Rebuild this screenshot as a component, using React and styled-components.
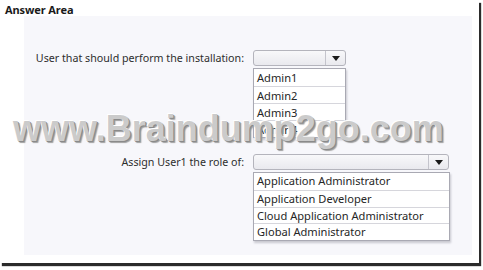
import React from "react";
import styled, { createGlobalStyle } from "styled-components";

const GlobalStyle = createGlobalStyle`
  html, body { margin: 0; padding: 0; background: #ffffff; }
  body { font-family: "Noto Sans", "Open Sans", Arial, sans-serif; }
`;

const Frame = styled.div`
  width: 483px;
  height: 270px;
  position: relative;
  overflow: hidden;
  background: #ffffff;
`;

const Screen = styled.div`
  width: 479px;
  height: 263px;
  background: #ffffff;
  box-shadow: 2px 3px 1px rgba(20, 20, 20, 0.9);
  display: flex;
  flex-direction: column;
`;

const Title = styled.div`
  font-family: "Noto Sans", Arial, sans-serif;
  font-weight: 700;
  font-size: 11px;
  line-height: 13px;
  color: #1a1a1a;
  padding: 3px 0 0 5px;
  height: 13px;
  letter-spacing: -0.1px;
`;

const Panel = styled.div`
  margin-left: 24px;
  width: 448px;
  height: 239px;
  background: #f7f7fb;
  display: grid;
  grid-template-columns: 220px auto;
  column-gap: 9px;
  align-content: start;
  padding-top: 34px;
  box-sizing: border-box;
`;

const Label = styled.div`
  font-size: 10.7px;
  line-height: 16px;
  height: 16px;
  color: #2e2e2e;
  text-align: right;
  white-space: nowrap;
  margin-top: ${(p) => p.$top || 0}px;
`;

const Field = styled.div`
  display: flex;
  flex-direction: column;
  align-items: flex-start;
  margin-top: ${(p) => p.$top || 0}px;
`;

const Select = styled.div`
  width: ${(p) => p.$w}px;
  height: 16px;
  box-sizing: border-box;
  border: 1px solid #b4b4bc;
  border-radius: 3px;
  background: linear-gradient(#f8f8fa, #e9e9ee);
  display: flex;
  justify-content: flex-end;
`;

const ArrowBox = styled.div`
  width: 19px;
  border-left: 1px solid #c4c4cc;
  display: flex;
  align-items: center;
  justify-content: center;
`;

const List = styled.div`
  margin-top: 2px;
  width: ${(p) => p.$w}px;
  box-sizing: border-box;
  background: #ffffff;
  border: 1px solid #a9a9b3;
  box-shadow: 1px 2px 2px rgba(60, 60, 80, 0.25);
  display: flex;
  flex-direction: column;
`;

const Item = styled.div`
  height: ${(p) => p.$h}px;
  line-height: ${(p) => p.$h}px;
  box-sizing: border-box;
  padding-left: 3px;
  font-size: 11.1px;
  color: #262626;
  white-space: nowrap;
  border-top: 1px solid #d6d6dc;
  &:first-child { border-top: none; }
`;

const Watermark = styled.div`
  position: absolute;
  left: 13px;
  top: 109px;
  font-family: "Liberation Sans", Arial, sans-serif;
  font-weight: 700;
  font-size: 36px;
  line-height: 40px;
  color: #cbcbcb;
  white-space: nowrap;
  text-shadow: -1px -1px 0 #ffffff, 1px 1px 0 #8a8a8a, 2px 2px 1px #a0a0a0;
  pointer-events: none;
`;

const Arrow = () => (
  <svg width="8" height="5" viewBox="0 0 8 5">
    <path d="M0 0 H8 L4 5 Z" fill="#1a1a1a" />
  </svg>
);

const Dropdown = ({ w, listW, items, rowH }) => (
  <>
    <Select $w={w}>
      <ArrowBox>
        <Arrow />
      </ArrowBox>
    </Select>
    <List $w={listW}>
      {items.map((t) => (
        <Item key={t} $h={rowH}>
          {t}
        </Item>
      ))}
    </List>
  </>
);

export default function App() {
  return (
    <Frame>
      <GlobalStyle />
      <Screen>
        <Title>Answer Area</Title>
        <Panel>
          <Label>User that should perform the installation:</Label>
          <Field>
            <Dropdown
              w={93}
              listW={93}
              rowH={17}
              items={["Admin1", "Admin2", "Admin3", "Admin4"]}
            />
          </Field>
          <Label $top={16}>Assign User1 the role of:</Label>
          <Field $top={16}>
            <Dropdown
              w={196}
              listW={197}
              rowH={16.75}
              items={[
                "Application Administrator",
                "Application Developer",
                "Cloud Application Administrator",
                "Global Administrator",
              ]}
            />
          </Field>
        </Panel>
      </Screen>
      <Watermark>www.Braindump2go.com</Watermark>
    </Frame>
  );
}
